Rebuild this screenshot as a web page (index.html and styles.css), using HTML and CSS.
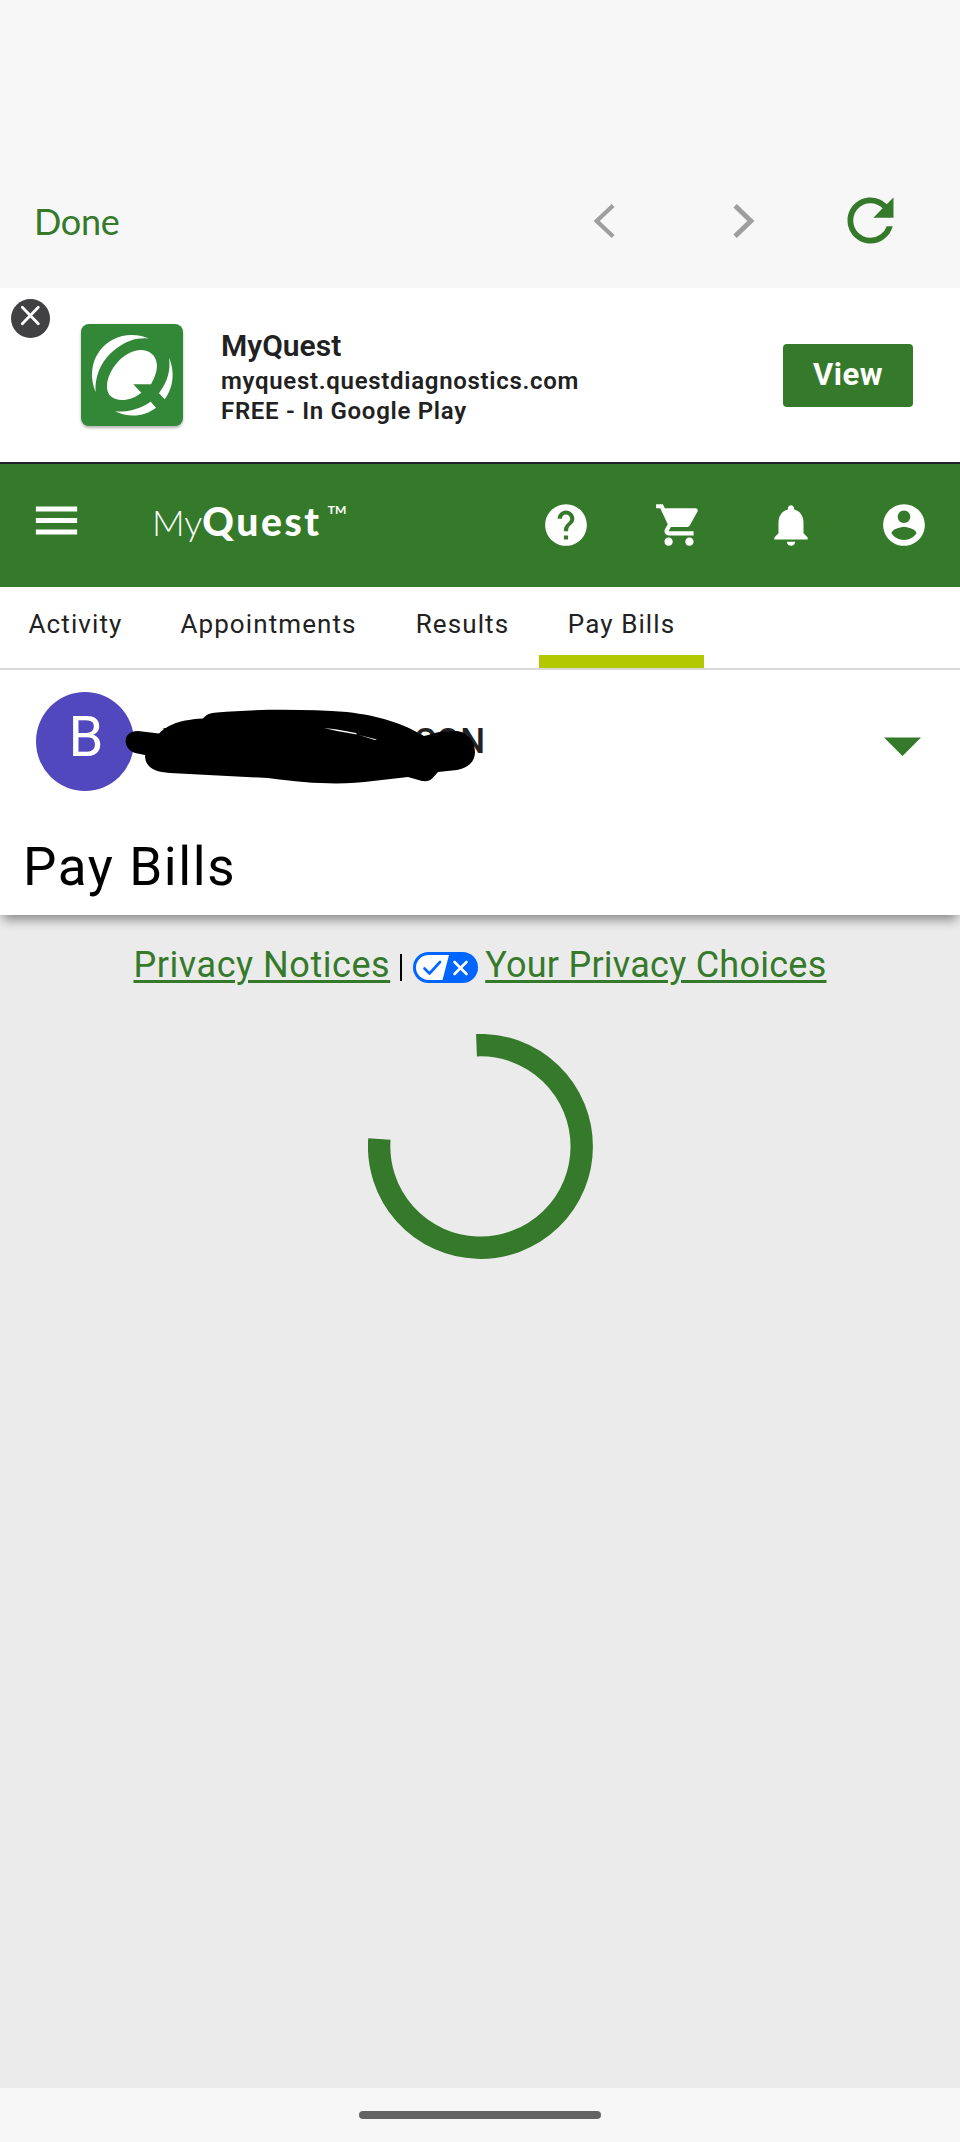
FILE: index.html
```html
<!DOCTYPE html>
<html lang="en">
<head>
    <meta charset="UTF-8">
    <meta name="viewport" content="width=device-width, initial-scale=1.0">
    <title>MyQuest - Pay Bills</title>
    <link rel="stylesheet" href="styles.css">
</head>
<body>
    <!-- Browser toolbar -->
    <div class="toolbar">
        <a class="done" href="#">Done</a>
        <svg class="tool-icon back" viewBox="0 0 24 24"><path d="M14.870 6.530L9.060 12l5.810 5.470"/></svg>
        <svg class="tool-icon forward" viewBox="0 0 24 24"><path d="M9.200 6.620L14.760 12L9.200 17.380"/></svg>
        <svg class="refresh" viewBox="0 0 24 24"><path d="M17.65 6.35A7.958 7.958 0 0 0 12 4c-4.42 0-7.99 3.58-7.99 8s3.57 8 7.99 8c3.73 0 6.84-2.55 7.73-6h-2.08A5.99 5.99 0 0 1 12 18c-3.31 0-6-2.69-6-6s2.69-6 6-6c1.66 0 3.14.69 4.22 1.78L13 11h7V4l-2.35 2.35z"/></svg>
    </div>

    <!-- App banner -->
    <div class="banner">
        <button class="banner-close" aria-label="Close">
            <svg viewBox="0 0 39 39"><path d="M11.3 8.3l16 16.4M27.3 8.3l-16 16.4"/></svg>
        </button>
        <svg class="app-icon" viewBox="0 0 102 102">
            <path d="M68 14.5C60 11 45 8.500 32 15.500C11 27 7 50 14.700 68C13.500 50 22 34 36 24C46 16.500 56 13.500 68 14.500z"/>
            <path d="M52.300 60.300H70C74 53 76.500 46 75.800 40C75 31 68 26 60 26C43 26 26 46 26 63C26 71 32 76 41 76C48 76 54 73.500 60.300 68.700z"/>
            <path d="M88 33.700C93 45 94 61 83.700 75.300L78 69.300C86 58 90 47 88 33.700z"/>
            <path d="M33.700 87.300C46 88.500 59 85 69.700 77.700L75 83.700C64 92.500 48 94 33.700 87.300z"/>
        </svg>
        <div class="banner-text">
            <div class="banner-title">MyQuest</div>
            <div class="banner-url">myquest.questdiagnostics.com</div>
            <div class="banner-price">FREE - In Google Play</div>
        </div>
        <a class="view-btn" href="#">View</a>
    </div>

    <!-- Site header -->
    <header class="header">
        <svg class="menu-icon" viewBox="0 0 24 24"><path d="M3 18.100h18v-2.200H3v2.200zm0-5h18v-2.200H3v2.200zm0-7.200v2.200h18V5.900H3z"/></svg>
        <div class="logo"><span class="logo-my">My</span><span class="logo-quest">Quest</span><span class="logo-tm">TM</span></div>
        <div class="header-icons">
            <svg viewBox="0 0 24 24"><path d="M12 2C6.480 2 2 6.480 2 12s4.480 10 10 10 10-4.480 10-10S17.520 2 12 2zm1 17h-2v-2h2v2zm2.070-7.750l-.9.920C13.450 12.900 13 13.500 13 15h-2v-.5c0-1.100.450-2.100 1.170-2.830l1.240-1.260c.370-.360.590-.860.590-1.410 0-1.100-.9-2-2-2s-2 .9-2 2H8c0-2.210 1.790-4 4-4s4 1.790 4 4c0 .880-.360 1.680-.930 2.250z"/></svg>
            <svg viewBox="0 0 24 24"><path d="M7 18c-1.100 0-1.990.9-1.990 2S5.900 22 7 22s2-.9 2-2-.9-2-2-2zM1 2v2h2l3.600 7.590-1.350 2.450c-.160.280-.250.610-.250.960 0 1.100.9 2 2 2h12v-2H7.420c-.140 0-.250-.110-.250-.250l.030-.120.9-1.630h7.450c.750 0 1.410-.410 1.750-1.030l3.580-6.490c.080-.140.120-.310.120-.480 0-.550-.450-1-1-1H5.210l-.940-2H1zm16 16c-1.100 0-1.990.9-1.990 2s.890 2 1.990 2 2-.9 2-2-.9-2-2-2z"/></svg>
            <svg viewBox="0 0 24 24"><path d="M12 22c1.100 0 2-.9 2-2h-4c0 1.100.9 2 2 2zm6-6v-5.200c0-3.100-1.600-5.600-4.500-6.300v-.5c0-.830-.670-1.500-1.500-1.500s-1.500.670-1.500 1.500v.5C7.640 5.200 6 7.700 6 10.800V16l-2 2v1h16v-1l-2-2z"/></svg>
            <svg viewBox="0 0 24 24"><path d="M12 2C6.480 2 2 6.480 2 12s4.480 10 10 10 10-4.480 10-10S17.520 2 12 2zm0 3c1.660 0 3 1.340 3 3s-1.340 3-3 3-3-1.340-3-3 1.340-3 3-3zm0 14.200c-2.500 0-4.710-1.280-6-3.220.030-1.990 4-3.080 6-3.080 1.990 0 5.970 1.090 6 3.080-1.290 1.940-3.500 3.220-6 3.220z"/></svg>
        </div>
    </header>

    <nav class="tabs">
        <a class="tab" href="#">Activity</a>
        <a class="tab" href="#">Appointments</a>
        <a class="tab" href="#">Results</a>
        <a class="tab active" href="#">Pay Bills</a>
    </nav>

    <!-- Patient selector and page title -->
    <section class="patient-card">
        <div class="patient">
            <div class="avatar">B</div>
            <div class="patient-name">
                <span>B</span><span>SON</span>
                <svg class="scribble" viewBox="0 0 356 80">
                    <path d="M13 23L34 25.500C41 19 50 12 78 10.500C82 6 85 5 92 4.500C130 1 180 1 222 4C255 8 277 15 299 28C308 26 312 23 328 23C342 22 350 33 350 44C350 54 343 60 332 62L313 64C307 70 307 74 297 73L283 69L248 73C220 77 185 76 143 70L45 65C30 64 20 60 20 47L10 45C-3 40 -3 23 13 23z"/>
                    <path class="gap" d="M199 20L212 21.500L231 25L232 26.500L212 23zM234 27L252 31.500L250 32z"/>
                </svg>
            </div>
            <svg class="caret" viewBox="0 0 37 19"><path d="M0 .500h37L18.500 19z"/></svg>
        </div>
        <h1>Pay Bills</h1>
    </section>

    <main class="content">
        <div class="privacy">
            <a class="notices" href="#">Privacy Notices</a>
            <span class="divider"></span>
            <svg class="choices-icon" viewBox="0 0 65 31">
                <rect class="pill" width="65" height="31" rx="15.500"/>
                <path class="pill-left" d="M15.500 3H36L29.500 28H15.500a12.500 12.500 0 0 1 0-25z"/>
                <path class="check" d="M11.500 16.500l5 5L27 10"/>
                <path class="cross" d="M41.500 10l12 12M53.500 10l-12 12"/>
            </svg>
            <a class="choices" href="#">Your Privacy Choices</a>
        </div>
        <svg class="spinner" viewBox="0 0 225 225">
            <path d="M108.500 11.200A101.300 101.300 0 1 1 11.400 105"/>
        </svg>
    </main>

    <div class="home-bar"><span></span></div>
</body>
</html>
```
FILE: styles.css
```css
:root {
    --green: #357a2a;
    --bar-background: #f7f7f7;
    --page-background: #ebebeb;
    --text-color: #212121;
}

* {
    box-sizing: border-box;
}

body {
    margin: 0;
    min-height: 2142px;
    display: flex;
    flex-direction: column;
    font-family: Roboto, "Liberation Sans", sans-serif;
    color: var(--text-color);
    background-color: var(--page-background);
}

a {
    color: inherit;
    text-decoration: none;
}

svg {
    display: block;
    flex-shrink: 0;
}

/* Browser toolbar */
.toolbar {
    display: flex;
    align-items: center;
    height: 288px;
    padding: 153px 55px 0 34px;
    background-color: var(--bar-background);
}

.done {
    margin-right: auto;
    font-family: Lato, sans-serif;
    font-size: 36px;
    letter-spacing: -0.3px;
    color: var(--green);
}

.tool-icon {
    width: 68px;
    height: 68px;
    fill: none;
    stroke: #9e9e9e;
    stroke-width: 1.5;
}

.forward {
    margin-left: 70px;
    stroke-width: 1.75;
}

.refresh {
    width: 69px;
    height: 69px;
    margin-left: 59px;
    fill: var(--green);
}

/* App banner */
.banner {
    display: flex;
    align-items: flex-start;
    height: 174px;
    padding: 11px 47px 0 11px;
    background-color: #fff;
}

.banner-close {
    width: 39px;
    height: 39px;
    padding: 0;
    border: none;
    border-radius: 50%;
    background-color: #414143;
}

.banner-close path {
    fill: none;
    stroke: #fff;
    stroke-width: 2.8;
    stroke-linecap: round;
}

.app-icon {
    width: 102px;
    height: 102px;
    margin: 25px 39px 0 31px;
    border-radius: 8px;
    background-color: #338838;
    box-shadow: 0 2px 3px rgba(0, 0, 0, 0.3);
    fill: #fff;
}

.banner-text {
    margin: 26px auto 0 -1px;
    font-size: 24px;
    font-weight: 600;
    line-height: 30px;
    letter-spacing: 0.7px;
}

.banner-title {
    font-size: 30px;
    line-height: 41px;
    letter-spacing: 0;
}

.view-btn {
    width: 130px;
    height: 63px;
    margin-top: 45px;
    border-radius: 4px;
    background-color: var(--green);
    color: #fff;
    font-size: 31px;
    font-weight: 700;
    line-height: 61px;
    letter-spacing: 0.5px;
    text-align: center;
}

/* Site header */
.header {
    display: flex;
    align-items: center;
    height: 125px;
    padding: 0 31px 0 29px;
    border-top: 2px solid #1f2029;
    background-color: var(--green);
    color: #fff;
    fill: #fff;
}

.menu-icon {
    width: 55px;
    height: 55px;
    margin-bottom: 11px;
}

.logo {
    display: flex;
    align-items: baseline;
    margin: 0 auto 8px 68px;
    font-family: Lato, sans-serif;
    font-size: 36px;
    line-height: 44px;
}

.logo-my {
    font-weight: 300;
}

.logo-quest {
    font-size: 39px;
    font-weight: 900;
    letter-spacing: 2.6px;
}

.logo-tm {
    align-self: flex-start;
    margin-left: 6px;
    font-size: 12px;
    font-weight: 700;
    line-height: 22px;
}

.header-icons {
    display: flex;
    gap: 62.6px;
    margin-bottom: 1px;
}

.header-icons svg {
    width: 50px;
    height: 50px;
}

/* Tabs */
.tabs {
    display: grid;
    grid-template-columns: 151px 235px 153px 165px;
    height: 83px;
    border-bottom: 2px solid #d9d9d9;
    background-color: #fff;
}

.tab {
    padding-top: 6px;
    border-bottom: 13px solid transparent;
    font-size: 26px;
    line-height: 62px;
    letter-spacing: 1.1px;
    text-align: center;
}

.tab.active {
    border-bottom-color: #b4c800;
}

/* Patient selector and page title */
.patient-card {
    height: 245px;
    padding-top: 22px;
    background-color: #fff;
    box-shadow: 0 8px 10px -3px rgba(0, 0, 0, 0.4);
}

.patient {
    display: flex;
    align-items: center;
    height: 99px;
    padding: 0 39px 0 36px;
}

.avatar {
    width: 98px;
    height: 99px;
    border-radius: 50%;
    background-color: #5248bd;
    color: #fff;
    font-size: 56px;
    line-height: 90px;
    text-align: center;
    padding-left: 2px;
}

.patient-name {
    position: relative;
    display: flex;
    justify-content: space-between;
    width: 324px;
    margin: 0 auto 0 27px;
    font-size: 35px;
    font-weight: 500;
    line-height: 44px;
}

/* Marker stroke covering the name */
.scribble {
    position: absolute;
    top: -12px;
    left: -36px;
    width: 356px;
    height: 80px;
}

.scribble .gap {
    fill: #fff;
}

.caret {
    width: 37px;
    height: 19px;
    margin-top: 10px;
    fill: var(--green);
}

h1 {
    margin: 46px 0 0 23px;
    color: #000;
    font-size: 53px;
    font-weight: 400;
    line-height: 60px;
    letter-spacing: 1.6px;
}

/* Content */
.content {
    display: flex;
    flex: 1;
    flex-direction: column;
    align-items: center;
    padding-top: 28px;
}

.privacy {
    display: flex;
    align-items: center;
    height: 44px;
    color: var(--green);
    font-size: 36px;
    line-height: 44px;
}

.privacy a {
    text-decoration: underline;
    text-decoration-thickness: 3px;
    text-underline-offset: 3px;
}

.notices {
    letter-spacing: 0.55px;
}

.choices {
    margin-left: 7px;
    letter-spacing: 0.25px;
}

.divider {
    width: 2px;
    height: 27px;
    margin: 5px 11px 0 10px;
    background-color: #000;
}

.choices-icon {
    width: 65px;
    height: 31px;
    margin-top: 5px;
}

.pill {
    fill: #0066ff;
}

.pill-left {
    fill: #fff;
}

.check,
.cross {
    fill: none;
    stroke: #0066ff;
    stroke-width: 2.6;
    stroke-linecap: round;
    stroke-linejoin: round;
}

.cross {
    stroke: #fff;
}

.spinner {
    width: 225px;
    height: 225px;
    margin-top: 47px;
}

.spinner path {
    fill: none;
    stroke: var(--green);
    stroke-width: 22.4;
}

/* Home indicator */
.home-bar {
    height: 54px;
    padding-top: 23px;
    background-color: var(--bar-background);
}

.home-bar span {
    display: block;
    width: 242px;
    height: 8px;
    margin: 0 auto;
    border-radius: 4px;
    background-color: #636363;
}
```
